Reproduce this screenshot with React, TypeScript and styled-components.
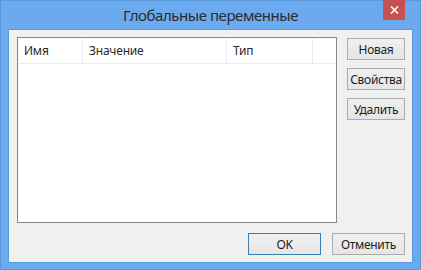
import React from "react";
import styled, { createGlobalStyle } from "styled-components";

const GlobalStyle = createGlobalStyle`
  html, body {
    margin: 0;
    padding: 0;
    background: #6caaf0;
  }
`;

const StyledWindow = styled.div`
  width: 421px;
  height: 270px;
  box-sizing: border-box;
  background: #6caaf0;
  border: 1px solid #5a98dc;
  display: flex;
  flex-direction: column;
  font-family: "Noto Sans", "Liberation Sans", sans-serif;
`;

const StyledTitleBar = styled.div`
  height: 29px;
  display: flex;
  position: relative;
  justify-content: center;
  align-items: center;
  padding-bottom: 1px;
`;

const StyledTitle = styled.div`
  font-size: 15px;
  color: #2b2b2b;
  letter-spacing: -0.45px;
  margin-top: 1px;
`;

const StyledClose = styled.div`
  position: absolute;
  top: -1px;
  right: 15px;
  width: 22px;
  height: 20px;
  background: #c75050;
  color: #ffffff;
  display: flex;
  justify-content: center;
  align-items: center;
`;

const StyledBody = styled.div`
  flex: 1;
  margin: 0 7px 6px 7px;
  background: #f0f0f0;
  border: 1px solid #5c9ad8;
  display: grid;
  grid-template-columns: 320px 1fr;
  grid-template-rows: 1fr auto;
  padding: 7px 8px 7px 8px;
  column-gap: 10px;
`;

const StyledList = styled.div`
  border: 1px solid #828790;
  background: #ffffff;
  height: 186px;
  box-sizing: border-box;
`;

const StyledHeader = styled.div`
  display: flex;
  height: 25px;
  border-bottom: 1px solid #e5edf5;
`;

const StyledColumn = styled.div<{ $width: number }>`
  width: ${(p) => p.$width}px;
  box-sizing: border-box;
  border-right: 1px solid #e5edf5;
  padding-left: 6px;
  font-size: 12px;
  letter-spacing: -0.2px;
  color: #2a2a2a;
  display: flex;
  align-items: center;
`;

const StyledSideButtons = styled.div`
  display: flex;
  flex-direction: column;
  gap: 8px;
  padding-top: 1px;
`;

const StyledButton = styled.button<{ $width?: number; $default?: boolean }>`
  width: ${(p) => p.$width ?? 58}px;
  height: 22px;
  box-sizing: border-box;
  border: 1px solid ${(p) => (p.$default ? "#3c7fb1" : "#acacac")};
  background: linear-gradient(#f0f0f0, #e5e5e5);
  font-family: "Noto Sans", "Liberation Sans", sans-serif;
  font-size: 12px;
  letter-spacing: -0.3px;
  color: #1e1e1e;
  padding: 0;
  display: flex;
  justify-content: center;
  align-items: center;
`;

const StyledFooter = styled.div`
  grid-column: 1 / 3;
  display: flex;
  justify-content: flex-end;
  gap: 11px;
  padding-top: 10px;
`;

function App() {
  return (
    <>
      <GlobalStyle />
      <StyledWindow>
        <StyledTitleBar>
          <StyledTitle>Глобальные переменные</StyledTitle>
          <StyledClose>
            <svg width="9" height="8" viewBox="0 0 9 8">
              <path d="M1 0.5 L8 7.5 M8 0.5 L1 7.5" stroke="#fff" strokeWidth="1.6" />
            </svg>
          </StyledClose>
        </StyledTitleBar>
        <StyledBody>
          <StyledList>
            <StyledHeader>
              <StyledColumn $width={65}>Имя</StyledColumn>
              <StyledColumn $width={144}>Значение</StyledColumn>
              <StyledColumn $width={86}>Тип</StyledColumn>
            </StyledHeader>
          </StyledList>
          <StyledSideButtons>
            <StyledButton>Новая</StyledButton>
            <StyledButton>Свойства</StyledButton>
            <StyledButton>Удалить</StyledButton>
          </StyledSideButtons>
          <StyledFooter>
            <StyledButton $width={73} $default>
              OK
            </StyledButton>
            <StyledButton $width={73}>Отменить</StyledButton>
          </StyledFooter>
        </StyledBody>
      </StyledWindow>
    </>
  );
}

export default App;
